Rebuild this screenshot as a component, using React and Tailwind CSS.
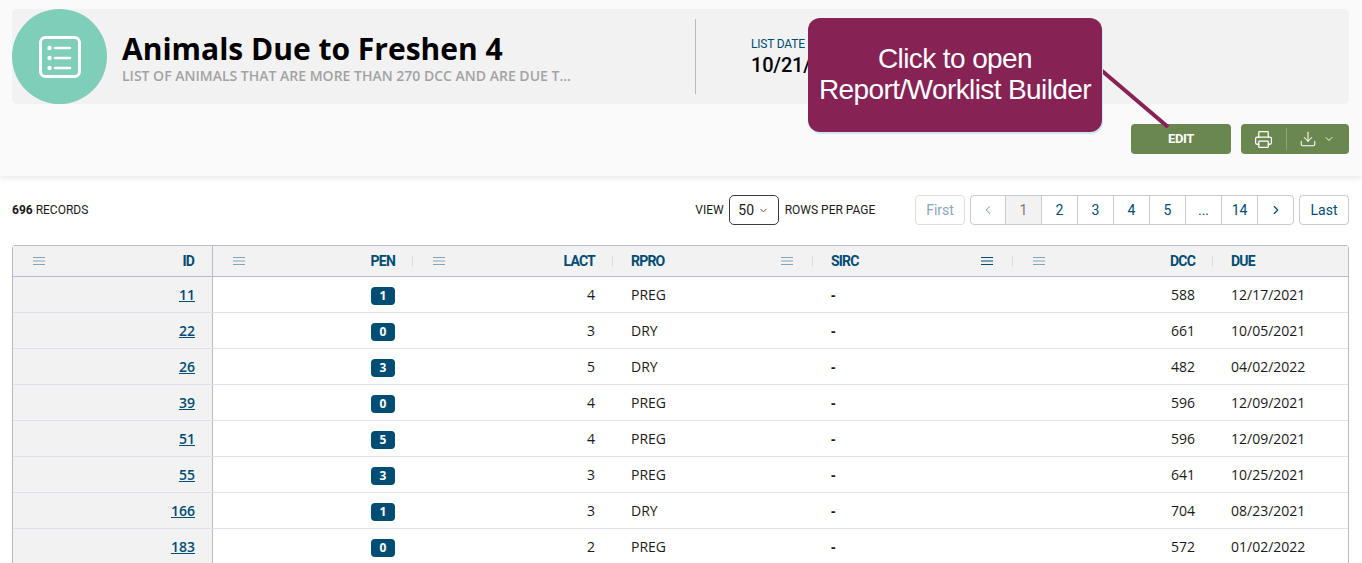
import { ChevronDown, ChevronLeft, ChevronRight, Download, Printer } from 'lucide-react';

const din = "font-['Roboto',sans-serif]";
const open = "font-['Open_Sans',sans-serif]";

const rows = [
  ['11', '1', '4', 'PREG', '588', '12/17/2021'],
  ['22', '0', '3', 'DRY', '661', '10/05/2021'],
  ['26', '3', '5', 'DRY', '482', '04/02/2022'],
  ['39', '0', '4', 'PREG', '596', '12/09/2021'],
  ['51', '5', '4', 'PREG', '596', '12/09/2021'],
  ['55', '3', '3', 'PREG', '641', '10/25/2021'],
  ['166', '1', '3', 'DRY', '704', '08/23/2021'],
  ['183', '0', '2', 'PREG', '572', '01/02/2022'],
];

function MenuIcon({ active }) {
  return (
    <svg width="12" height="8" viewBox="0 0 12 8" className={active ? 'text-[#004d73]' : 'text-[#86a3b5]'}>
      <path d="M0 .5h12M0 4h12M0 7.5h12" stroke="currentColor" strokeWidth="1" fill="none" />
    </svg>
  );
}

function HeadCell({ label, active, left, iconRight, sep = true }) {
  return (
    <div className={`relative flex items-center h-full justify-between ${left ? 'pl-[18px] pr-[20px]' : 'pl-[20px] pr-[18px]'}`}>
      {!left && <MenuIcon />}
      <span className={`${din} text-[14px] font-bold tracking-[-0.8px] text-[#004d73] mt-px`}>{label}</span>
      {left && iconRight && <MenuIcon active={active} />}
      {sep && <span className="absolute right-0 top-[10px] h-[10px] w-px bg-[#d8dadd]" />}
    </div>
  );
}

export default function App() {
  return (
    <div className={`relative w-[1362px] h-[563px] overflow-hidden bg-white ${open}`}>
      <header className="h-[176px] bg-[#fafafa] shadow-[0_2px_6px_rgba(0,0,0,0.1)] pl-3 pr-[13px] pt-[9px] pb-[22px] flex flex-col justify-between">
        <div className="h-[95px] bg-[#f2f2f2] rounded-[5px] flex items-center">
          <div className="w-[95px] h-[95px] rounded-full bg-[#7fceb9] flex items-center justify-center shrink-0">
            <svg width="42" height="42" viewBox="0 0 42 42" fill="none" stroke="white">
              <rect x="1.5" y="1.5" width="39" height="39" rx="5" strokeWidth="3" />
              <circle cx="10.5" cy="12" r="2.2" fill="white" stroke="none" />
              <circle cx="10.5" cy="22" r="2.2" fill="white" stroke="none" />
              <circle cx="10.5" cy="32" r="2.2" fill="white" stroke="none" />
              <path d="M16 12h15M16 22h15M16 32h15" strokeWidth="2.6" strokeLinecap="round" />
            </svg>
          </div>
          <div className="ml-[15px] w-[573px] shrink-0">
            <div className="text-[30px] leading-[34px] font-bold text-black mt-[4px]">Animals Due to Freshen 4</div>
            <div className="text-[14px] leading-[18px] font-semibold text-[#a3a3a3] mt-[1px]">LIST OF ANIMALS THAT ARE MORE THAN 270 DCC AND ARE DUE T...</div>
          </div>
          <div className="w-px h-[75px] bg-[#b9b9b9] shrink-0" />
          <div className="ml-[55px] mt-[2px]">
            <div className={`${din} text-[12px] leading-[14px] tracking-[-0.2px] text-[#004d73]`}>LIST DATE</div>
            <div className={`${din} text-[20px] leading-[28px] font-medium tracking-[-0.2px] text-black`}>10/21/2021</div>
          </div>
        </div>
        <div className="flex justify-end gap-[10px]">
          <button className={`${din} w-[100px] h-[30px] rounded-[4px] bg-[#6a874f] text-white text-[13px] tracking-[-0.4px] font-bold`}>EDIT</button>
          <div className="w-[108px] h-[30px] rounded-[4px] bg-[#6a874f] text-white flex items-center">
            <div className="w-[45px] flex justify-center">
              <Printer size={19} strokeWidth={1.6} />
            </div>
            <div className="w-px h-[22px] bg-[#8ea277]" />
            <div className="flex items-center pl-[12px] gap-[6px]">
              <Download size={18} strokeWidth={1.4} />
              <ChevronDown size={12} strokeWidth={1.8} />
            </div>
          </div>
        </div>
      </header>

      <div className={`${din} h-[30px] mt-[19px] ml-3 mr-[13px] flex items-center text-[#1a1a1a]`}>
        <div className="text-[12px]"><span className="font-bold">696</span> RECORDS</div>
        <div className="ml-[607px] flex items-center text-[12px]">
          <span>VIEW</span>
          <div className="ml-[5px] w-[50px] h-[30px] border border-[#3c3c3c] rounded-[5px] flex items-center justify-center gap-[4px] text-[14px]">
            50 <ChevronDown size={11} strokeWidth={1.6} />
          </div>
          <span className="ml-[6px]">ROWS PER PAGE</span>
        </div>
        <div className="ml-auto flex items-center text-[14px] text-[#004d73]">
          <div className="w-[50px] h-[30px] border border-[#dcdfe3] rounded-[4px] flex items-center justify-center text-[#8aa6b8]">First</div>
          <div className="ml-[5px] h-[30px] flex border border-[#c9cbce] rounded-[4px] overflow-hidden">
            <div className="w-[35px] flex items-center justify-center text-[#8aa6b8] border-r border-[#c9cbce]"><ChevronLeft size={14} strokeWidth={1.8} /></div>
            <div className="w-[36px] flex items-center justify-center text-[#777] bg-[#f2f2f2] border-r border-[#c9cbce]">1</div>
            {['2', '3', '4', '5', '...', '14'].map((p) => (
              <div key={p} className="w-[36px] flex items-center justify-center border-r border-[#c9cbce]">{p}</div>
            ))}
            <div className="w-[35px] flex items-center justify-center"><ChevronRight size={14} strokeWidth={2} /></div>
          </div>
          <div className="ml-[5px] w-[50px] h-[30px] border border-[#c9cbce] rounded-[4px] flex items-center justify-center">Last</div>
        </div>
      </div>

      <div className="ml-3 mt-[20px] w-[1337px] border border-[#b9bdc9] rounded-t-[3px]">
        <div className="grid grid-cols-[200px_200px_200px_200px_200px_200px_1fr] h-[31px] bg-[#f2f2f2] border-b border-[#b9bdc9]">
          <div className="border-r border-[#b9bdc9]"><HeadCell label="ID" sep={false} /></div>
          <HeadCell label="PEN" />
          <HeadCell label="LACT" />
          <HeadCell label="RPRO" left iconRight />
          <HeadCell label="SIRC" left iconRight active />
          <HeadCell label="DCC" />
          <HeadCell label="DUE" left sep={false} />
        </div>
        {rows.map((r) => (
          <div key={r[0]} className="grid grid-cols-[200px_200px_200px_200px_200px_200px_1fr] h-[36px] border-b border-[#dfe2ea] text-[14px] text-[#1a1a1a] items-center">
            <div className="h-full bg-[#f2f2f2] border-r border-[#b9bdc9] flex items-center justify-end pr-[17px]">
              <a className="font-semibold text-[#004d73] underline">{r[0]}</a>
            </div>
            <div className="flex justify-end pr-[18px]">
              <span className="w-[24px] h-[18px] mt-[2px] rounded-[4px] bg-[#004d73] text-white text-[12px] font-bold flex items-center justify-center">{r[1]}</span>
            </div>
            <div className="text-right pr-[18px]">{r[2]}</div>
            <div className="pl-[18px]">{r[3]}</div>
            <div className="pl-[18px] font-bold">-</div>
            <div className="text-right pr-[18px]">{r[4]}</div>
            <div className="pl-[18px]">{r[5]}</div>
          </div>
        ))}
      </div>

      <svg className="absolute left-[1095px] top-[62px]" width="80" height="72" viewBox="0 0 80 72" fill="none">
        <path d="M6 8L73 65" stroke="#862254" strokeWidth="4" />
      </svg>
      <div className="absolute left-[808px] top-[18px] w-[294px] h-[114px] rounded-[12px] bg-[#862254] shadow-[1px_2px_0_#cfe6f7] flex items-center justify-center text-center text-white font-['Liberation_Sans',sans-serif] text-[28px] tracking-[-0.6px] leading-[31px]">
        <div className="mt-[-2px]">Click to open<br />Report/Worklist Builder</div>
      </div>
    </div>
  );
}
